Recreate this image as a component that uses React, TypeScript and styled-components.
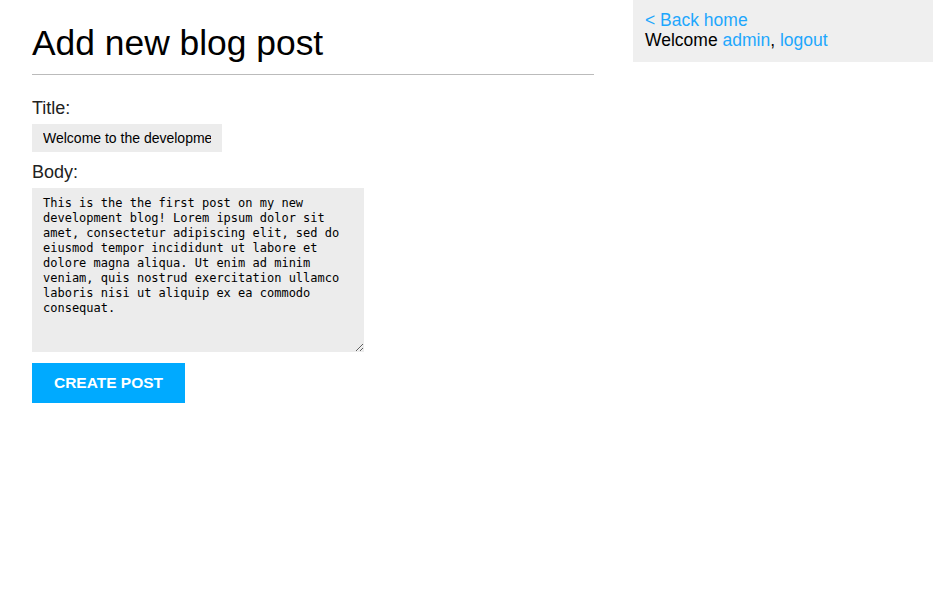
import React, { useState } from 'react';
import styled, { createGlobalStyle } from 'styled-components';

const GlobalStyle = createGlobalStyle`
  html, body {
    margin: 0;
    padding: 0;
    background: #fff;
    font-family: "Liberation Sans", Arial, sans-serif;
    color: #000;
  }
`;

const BODY_TEXT =
  'This is the the first post on my new development blog! Lorem ipsum dolor sit amet, consectetur adipiscing elit, sed do eiusmod tempor incididunt ut labore et dolore magna aliqua. Ut enim ad minim veniam, quis nostrud exercitation ullamco laboris nisi ut aliquip ex ea commodo consequat.';

export default function App() {
    const [title, setTitle] = useState('Welcome to the development blog');
    const [body, setBody] = useState(BODY_TEXT);

    return (
        <>
            <GlobalStyle />
            <Page>
                <Main>
                    <Heading>Add new blog post</Heading>
                    <Divider />
                    <Form onSubmit={(e) => e.preventDefault()}>
                        <Label htmlFor='title'>Title:</Label>
                        <TitleInput id='title' value={title} onChange={(e) => setTitle(e.target.value)} />
                        <Label htmlFor='body'>Body:</Label>
                        <BodyInput id='body' value={body} onChange={(e) => setBody(e.target.value)} />
                        <SubmitButton type='submit'>Create post</SubmitButton>
                    </Form>
                </Main>
                <Sidebar>
                    <Link href='#'>&lt; Back home</Link>
                    <div>
                        Welcome <Link href='#'>admin</Link>, <Link href='#'>logout</Link>
                    </div>
                </Sidebar>
            </Page>
        </>
    );
}

const Page = styled.div`
  display: flex;
  align-items: flex-start;
`;

const Main = styled.main`
  width: 562px;
  margin-left: 32px;
`;

const Heading = styled.h1`
  margin: 22px 0 0;
  font-size: 35.4px;
  font-weight: normal;
  line-height: 42px;
`;

const Divider = styled.hr`
  margin: 10px 0 0;
  border: none;
  border-top: 1px solid #bbb;
`;

const Form = styled.form`
  display: flex;
  flex-direction: column;
  align-items: flex-start;
  padding-top: 23px;
`;

const Label = styled.label`
  font-size: 18px;
  line-height: 20px;
  color: #222;
  margin-bottom: 6px;
`;

const TitleInput = styled.input`
  box-sizing: border-box;
  width: 190px;
  height: 28px;
  padding: 0 11px;
  margin-bottom: 10px;
  border: none;
  outline: none;
  background: #ececec;
  font-family: "Liberation Sans", Arial, sans-serif;
  font-size: 14px;
  color: #000;
`;

const BodyInput = styled.textarea`
  box-sizing: border-box;
  width: 332px;
  height: 164px;
  padding: 8px 11px;
  margin-bottom: 11px;
  border: none;
  outline: none;
  background: #ececec;
  font-family: "DejaVu Sans Mono", "Liberation Mono", monospace;
  font-size: 12px;
  line-height: 15px;
  color: #000;
`;

const SubmitButton = styled.button`
  width: 153px;
  height: 40px;
  border: none;
  background: #00aaff;
  color: #fff;
  font-family: "Liberation Sans", Arial, sans-serif;
  font-size: 15.5px;
  font-weight: bold;
  text-transform: uppercase;
  cursor: pointer;
`;

const Sidebar = styled.aside`
  box-sizing: border-box;
  width: 300px;
  height: 62px;
  margin-left: auto;
  padding: 10px 12px;
  background: #efefef;
  font-size: 17.5px;
  line-height: 20px;
`;

const Link = styled.a`
  color: #1ea7fd;
  text-decoration: none;
`;
